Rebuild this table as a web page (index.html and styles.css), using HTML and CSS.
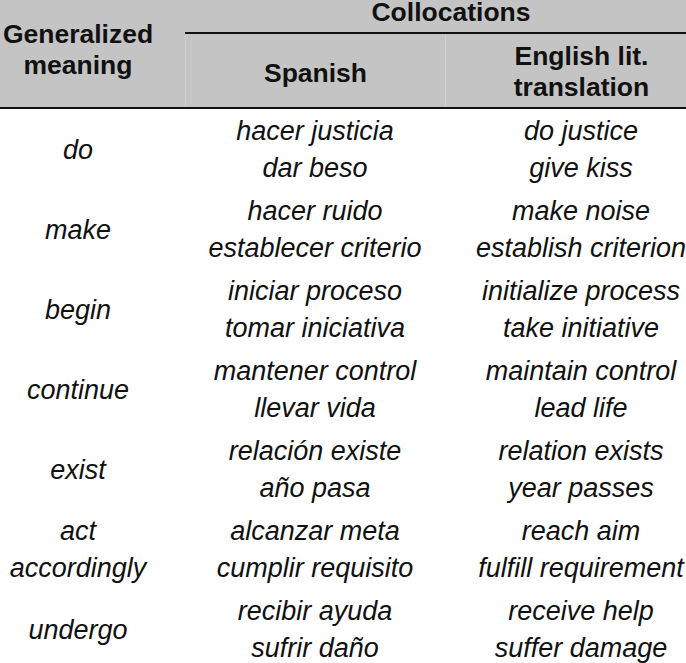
FILE: index.html
```html
<!DOCTYPE html>
<html>
<head>
<meta charset="utf-8">
<link rel="stylesheet" href="styles.css">
</head>
<body>
<div class="table">
  <div class="head">
    <div class="h-gen">Generalized<br>meaning</div>
    <div class="h-coll">Collocations</div>
    <div class="h-sp">Spanish</div>
    <div class="h-en">English lit.<br>translation</div>
  </div>
  <div class="body">
    <div class="row"><div class="c1">do</div><div class="c2">hacer justicia<br>dar beso</div><div class="c3">do justice<br>give kiss</div></div>
    <div class="row"><div class="c1">make</div><div class="c2">hacer ruido<br>establecer criterio</div><div class="c3">make noise<br>establish criterion</div></div>
    <div class="row"><div class="c1">begin</div><div class="c2">iniciar proceso<br>tomar iniciativa</div><div class="c3">initialize process<br>take initiative</div></div>
    <div class="row"><div class="c1">continue</div><div class="c2">mantener control<br>llevar vida</div><div class="c3">maintain control<br>lead life</div></div>
    <div class="row"><div class="c1">exist</div><div class="c2">relación existe<br>año pasa</div><div class="c3">relation exists<br>year passes</div></div>
    <div class="row"><div class="c1">act<br>accordingly</div><div class="c2">alcanzar meta<br>cumplir requisito</div><div class="c3">reach aim<br>fulfill requirement</div></div>
    <div class="row"><div class="c1">undergo</div><div class="c2">recibir ayuda<br>sufrir daño</div><div class="c3">receive help<br>suffer damage</div></div>
  </div>
</div>
</body>
</html>
```
FILE: styles.css
```css
html, body {
  margin: 0;
  padding: 0;
  background: #fff;
  overflow: hidden;
}
.table {
  width: 717px;
  font-family: "Liberation Sans", Arial, sans-serif;
  color: #111;
}
.head {
  display: grid;
  grid-template-columns: 185px 260px 272px;
  grid-template-rows: 34px 73px;
  background: #c4c4c4;
  border-bottom: 2px solid #111;
  font-weight: bold;
  font-size: 26.5px;
  line-height: 31px;
  text-align: center;
}
.h-gen {
  grid-row: 1 / 3;
  grid-column: 1;
  padding-right: 29px;
  padding-bottom: 8px;
  display: flex;
  align-items: center;
  justify-content: center;
}
.h-coll {
  grid-row: 1;
  grid-column: 2 / 4;
  border-bottom: 2px solid #111;
  display: flex;
  align-items: center;
  justify-content: center;
  margin-top: -8px;
}
.h-sp, .h-en {
  display: flex;
  align-items: center;
  justify-content: center;
  border-left: 1px solid #cfcfcf;
}
.h-sp {
  grid-row: 2;
  grid-column: 2;
  padding-top: 6px;
}
.h-en {
  grid-row: 2;
  grid-column: 3;
  padding-top: 2px;
}
.body {
  padding-top: 1px;
  font-style: italic;
  font-size: 27px;
  line-height: 37px;
  text-align: center;
}
.row {
  display: grid;
  grid-template-columns: 185px 260px 272px;
  height: 80px;
}
.row > div {
  display: flex;
  align-items: center;
  justify-content: center;
}
.c1 {
  padding-right: 29px;
}
```
